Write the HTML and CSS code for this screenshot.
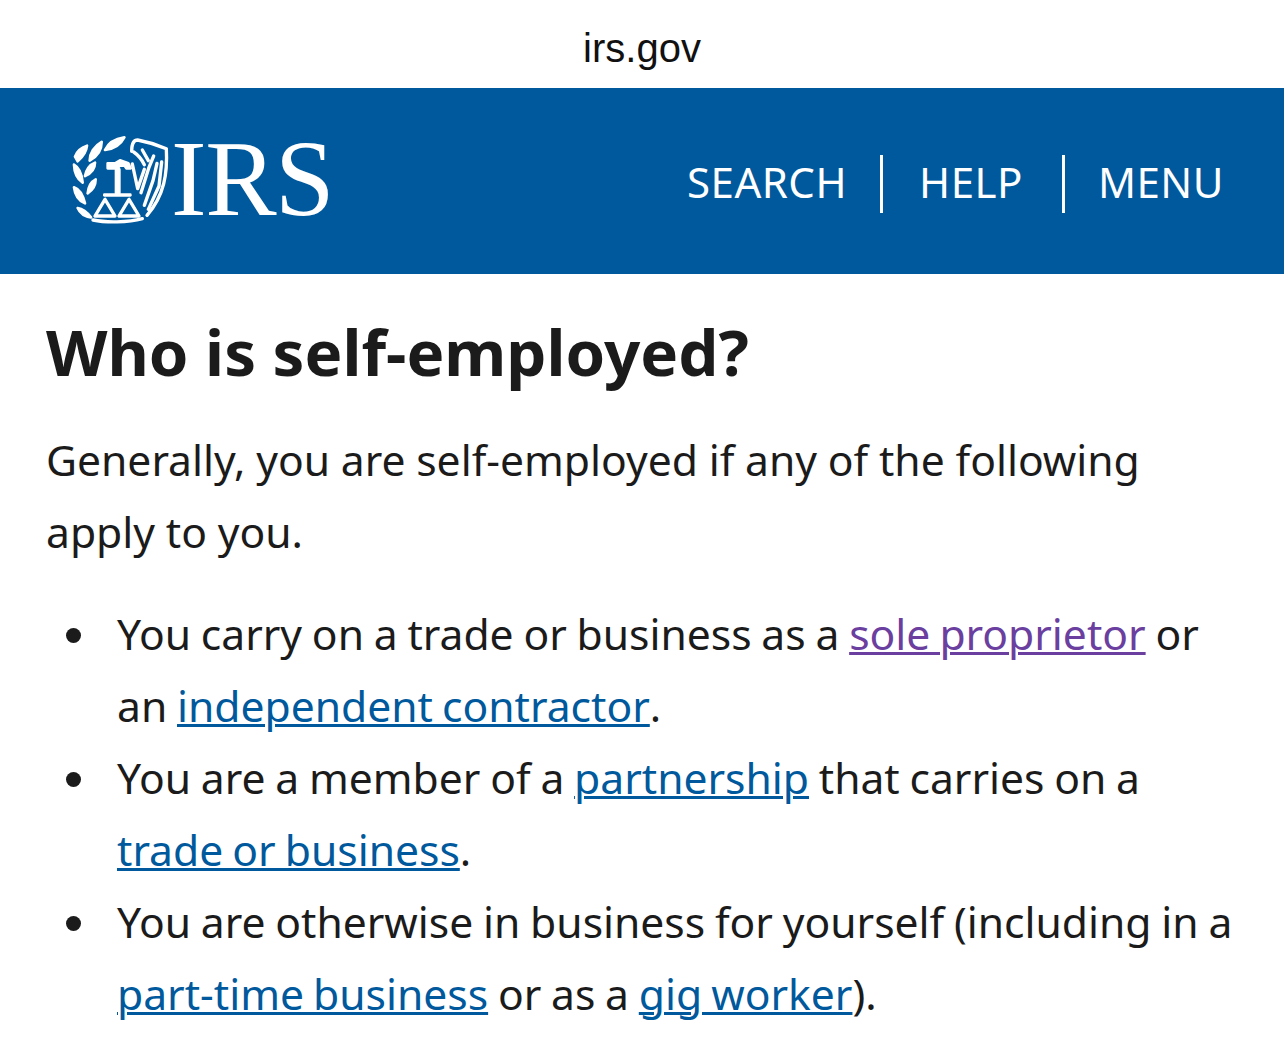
FILE: index.html
```html
<!DOCTYPE html>
<html lang="en">
<head>
<meta charset="utf-8">
<title>Who is self-employed?</title>
<link rel="stylesheet" href="styles.css">
</head>
<body>
<div class="urlbar">irs.gov</div>
<header class="masthead">
  <a class="logo" href="#">
    <svg class="seal" viewBox="0 0 318 300" aria-hidden="true">
      <g fill="#fff" stroke="#fff" stroke-width="8" stroke-linejoin="round">
        <path d="M120 60C130 38 152 26 178 22C168 42 150 56 120 60Z"/>
        <path d="M74 92C74 70 88 48 110 36C110 60 96 80 74 92Z"/>
        <path d="M30 80C36 62 50 52 66 47C64 66 52 82 38 94Z"/>
        <path d="M27 104C42 112 50 128 53 158C38 148 28 132 27 104Z"/>
        <path d="M60 138C64 118 74 104 90 98C90 116 78 130 60 138Z"/>
        <path d="M27 172C42 177 53 192 60 220C42 213 30 196 27 172Z"/>
        <path d="M68 190C70 168 80 154 92 148C92 166 84 180 68 190Z"/>
        <path d="M38 234C52 236 66 246 78 262C60 260 46 252 38 234Z"/>
        <path d="M128 100H150L165 91L190 100L197 115H184L178 106L162 108L160 115H128Z"/>
        <path d="M153 118H163V190H153Z"/>
        <path d="M118 194H196V196H118Z"/>
      </g>
      <g fill="none" stroke="#fff" stroke-width="10" stroke-linejoin="round" stroke-linecap="round">
        <path d="M120 208L90 258H150Z"/>
        <path d="M192 208L162 258H222Z"/>
        <path d="M84 270C120 278 190 278 232 266"/>
        <path d="M200 64C200 42 206 30 218 30C250 36 280 46 304 56C308 130 298 196 246 256"/>
        <path d="M202 102L218 176L238 118"/>
        <path d="M206 66C218 74 230 88 238 104"/>
        <path d="M232 60L250 92"/>
        <path d="M266 78L252 112L228 188"/>
        <path d="M276 100L264 152L238 226"/>
        <path d="M290 96L282 168L250 238"/>
      </g>
    </svg>
    <span class="wordmark">IRS</span>
  </a>
  <nav class="topnav">
    <a href="#">SEARCH</a>
    <a href="#">HELP</a>
    <a href="#">MENU</a>
  </nav>
</header>
<main class="content">
  <h1>Who is self-employed?</h1>
  <p>Generally, you are self-employed if any of the following apply to you.</p>
  <ul>
    <li>You carry on a trade or business as a <a class="visited" href="#">sole proprietor</a> or an <a href="#">independent contractor</a>.</li>
    <li>You are a member of a <a href="#">partnership</a> that carries on a <a href="#">trade or business</a>.</li>
    <li>You are otherwise in business for yourself (including in a <a href="#">part-time business</a> or as a <a href="#">gig worker</a>).</li>
  </ul>
</main>
</body>
</html>
```
FILE: styles.css
```css
html, body { margin: 0; padding: 0; height: 1048px; overflow: hidden; background: #fff; }
body { font-family: "Noto Sans", "Open Sans", sans-serif; color: #1b1b1b; }
.urlbar { height: 88px; box-sizing: border-box; padding-top: 25px; text-align: center; font: 40px/46px "Liberation Sans", sans-serif; color: #111; }
.masthead { height: 186px; background: #00599c; display: flex; align-items: center; justify-content: space-between; padding: 0 60px 0 65px; }
.logo { display: flex; align-items: center; color: #fff; text-decoration: none; }
.seal { display: block; width: 106px; height: 100px; margin-top: -2px; }
.wordmark { font: 107px/90px "Liberation Serif", serif; color: #fff; letter-spacing: -1.5px; margin-top: -4px; }
.topnav { display: flex; align-items: stretch; margin-top: 6px; }
.topnav a { color: #fff; text-decoration: none; font-size: 42px; font-weight: 400; letter-spacing: 0.5px; line-height: 54px; padding: 0 36px 4px; border-left: 3px solid #fff; }
.topnav a:first-child { border-left: 0; padding-right: 33px; }
.topnav a:nth-child(2) { padding-right: 39px; }
.topnav a:last-child { padding: 0 0 4px 33px; }
.content { padding: 0 46px; }
h1 { margin: 40px 0 0; font-size: 63.6px; line-height: 76px; font-weight: 700; }
p { margin: 33px 0 0; font-size: 42.6px; line-height: 72px; word-spacing: -0.3px; }
ul { margin: 30px 0 0; padding: 0 0 0 71px; font-size: 42.6px; line-height: 72px; list-style: none; word-spacing: -1.3px; }
li::before { content: ""; display: inline-block; width: 15px; height: 15px; border-radius: 50%; background: #1b1b1b; margin-left: -51px; margin-right: 36px; vertical-align: 7px; }
a { color: #00599c; text-decoration-thickness: 3px; word-spacing: -2px; }
a.visited { color: #6b3fa0; }
```
